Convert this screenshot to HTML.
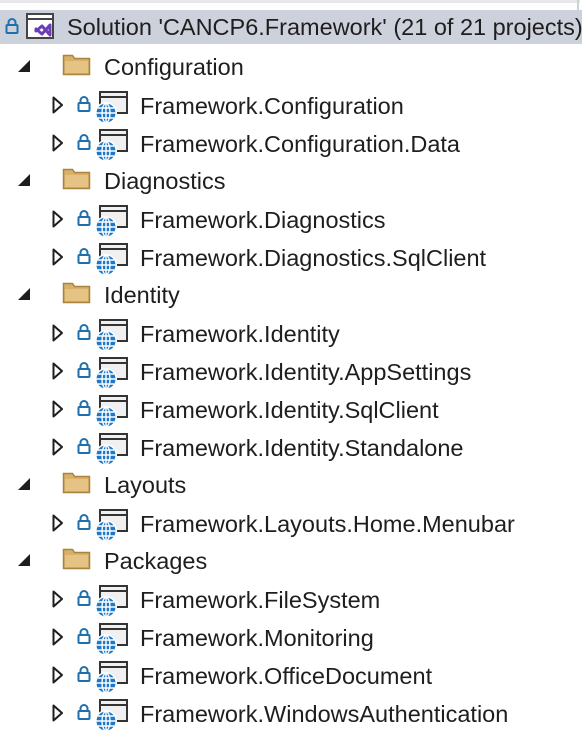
<!DOCTYPE html>
<html><head><style>
body{margin:0;width:582px;height:731px;background:#fff;position:relative;overflow:hidden;font-family:"Liberation Sans",sans-serif;font-size:23.5px;color:#1e1e1e}
.row{position:absolute;left:0;width:582px;height:38px}
.t{position:absolute;top:6px;white-space:nowrap}
svg{position:absolute}
</style></head><body>
<div style="position:absolute;left:0;top:0;width:580px;height:3px;background:#e8e8ec"></div>
<div style="position:absolute;left:577px;top:0;width:2px;height:44px;background:#d0d0d8"></div>
<div class="row" style="top:10px;height:34px;background:#cdd1db">
<svg style="left:5px;top:8px" width="14" height="16"><path d="M3.5 7V4.5a3.5 3.5 0 0 1 7 0V7" fill="none" stroke="#1e6fae" stroke-width="2"/><rect x="1.5" y="7" width="11" height="8" rx="1" fill="none" stroke="#1e6fae" stroke-width="2"/></svg>
<svg style="left:26px;top:3px" width="32" height="30"><rect x="1" y="1" width="26" height="24" fill="#fff" stroke="#444" stroke-width="2"/><line x1="1" y1="6" x2="27" y2="6" stroke="#444" stroke-width="2"/><path d="M10 18l6-5 8 9V12l-8 9-6-5z" fill="#fff" stroke="#6a3fb5" stroke-width="3" stroke-linejoin="round"/></svg>
<div class="t" style="left:67px;top:4px">Solution 'CANCP6.Framework' (21 of 21 projects)</div>
</div>
<div id="c"></div>
<script>
var rows=[["f","Configuration"],["p","Framework.Configuration"],["p","Framework.Configuration.Data"],["f","Diagnostics"],["p","Framework.Diagnostics"],["p","Framework.Diagnostics.SqlClient"],["f","Identity"],["p","Framework.Identity"],["p","Framework.Identity.AppSettings"],["p","Framework.Identity.SqlClient"],["p","Framework.Identity.Standalone"],["f","Layouts"],["p","Framework.Layouts.Home.Menubar"],["f","Packages"],["p","Framework.FileSystem"],["p","Framework.Monitoring"],["p","Framework.OfficeDocument"],["p","Framework.WindowsAuthentication"]];
var h="";
rows.forEach(function(r,i){var y=48+i*38;
if(r[0]=="f"){h+='<div class="row" style="top:'+y+'px"><svg style="left:18px;top:12px" width="13" height="13"><path d="M12 0V12H0Z" fill="#1e1e1e"/></svg><svg style="left:62px;top:5px" width="30" height="25"><path d="M1.5 2.5h9l2 3h15v16h-26z" fill="#d8b06a" stroke="#a8843e" stroke-width="1.5"/><rect x="3" y="8" width="23" height="12" fill="#e4c384"/></svg><div class="t" style="left:104px;top:6px">'+r[1]+'</div></div>';}
else{h+='<div class="row" style="top:'+y+'px"><svg style="left:52px;top:10px" width="12" height="18"><path d="M1.5 1.5L10 9 1.5 16.5Z" fill="none" stroke="#1e1e1e" stroke-width="2" stroke-linejoin="round"/></svg><svg style="left:77px;top:10px" width="14" height="16"><path d="M3.5 7V4.5a3.5 3.5 0 0 1 7 0V7" fill="none" stroke="#1e6fae" stroke-width="2"/><rect x="1.5" y="7" width="11" height="8" rx="1" fill="none" stroke="#1e6fae" stroke-width="2"/></svg><svg style="left:94px;top:5px" width="38" height="34"><rect x="6" y="1" width="27" height="21" fill="#f0f0f0" stroke="#333" stroke-width="2"/><line x1="6" y1="6" x2="33" y2="6" stroke="#333" stroke-width="2"/><circle cx="12" cy="22" r="11" fill="#fff"/><circle cx="12" cy="22" r="9.5" fill="#1e78c8"/><g fill="none" stroke="#fff" stroke-width="1.4"><ellipse cx="12" cy="22" rx="4" ry="9.5"/><line x1="2.5" y1="22" x2="21.5" y2="22"/><line x1="12" y1="12.5" x2="12" y2="31.5"/><path d="M4 17h16M4 27h16"/></g></svg><div class="t" style="left:140px;top:7px">'+r[1]+'</div></div>';}
});
document.getElementById("c").innerHTML=h;
</script>
</body></html>
